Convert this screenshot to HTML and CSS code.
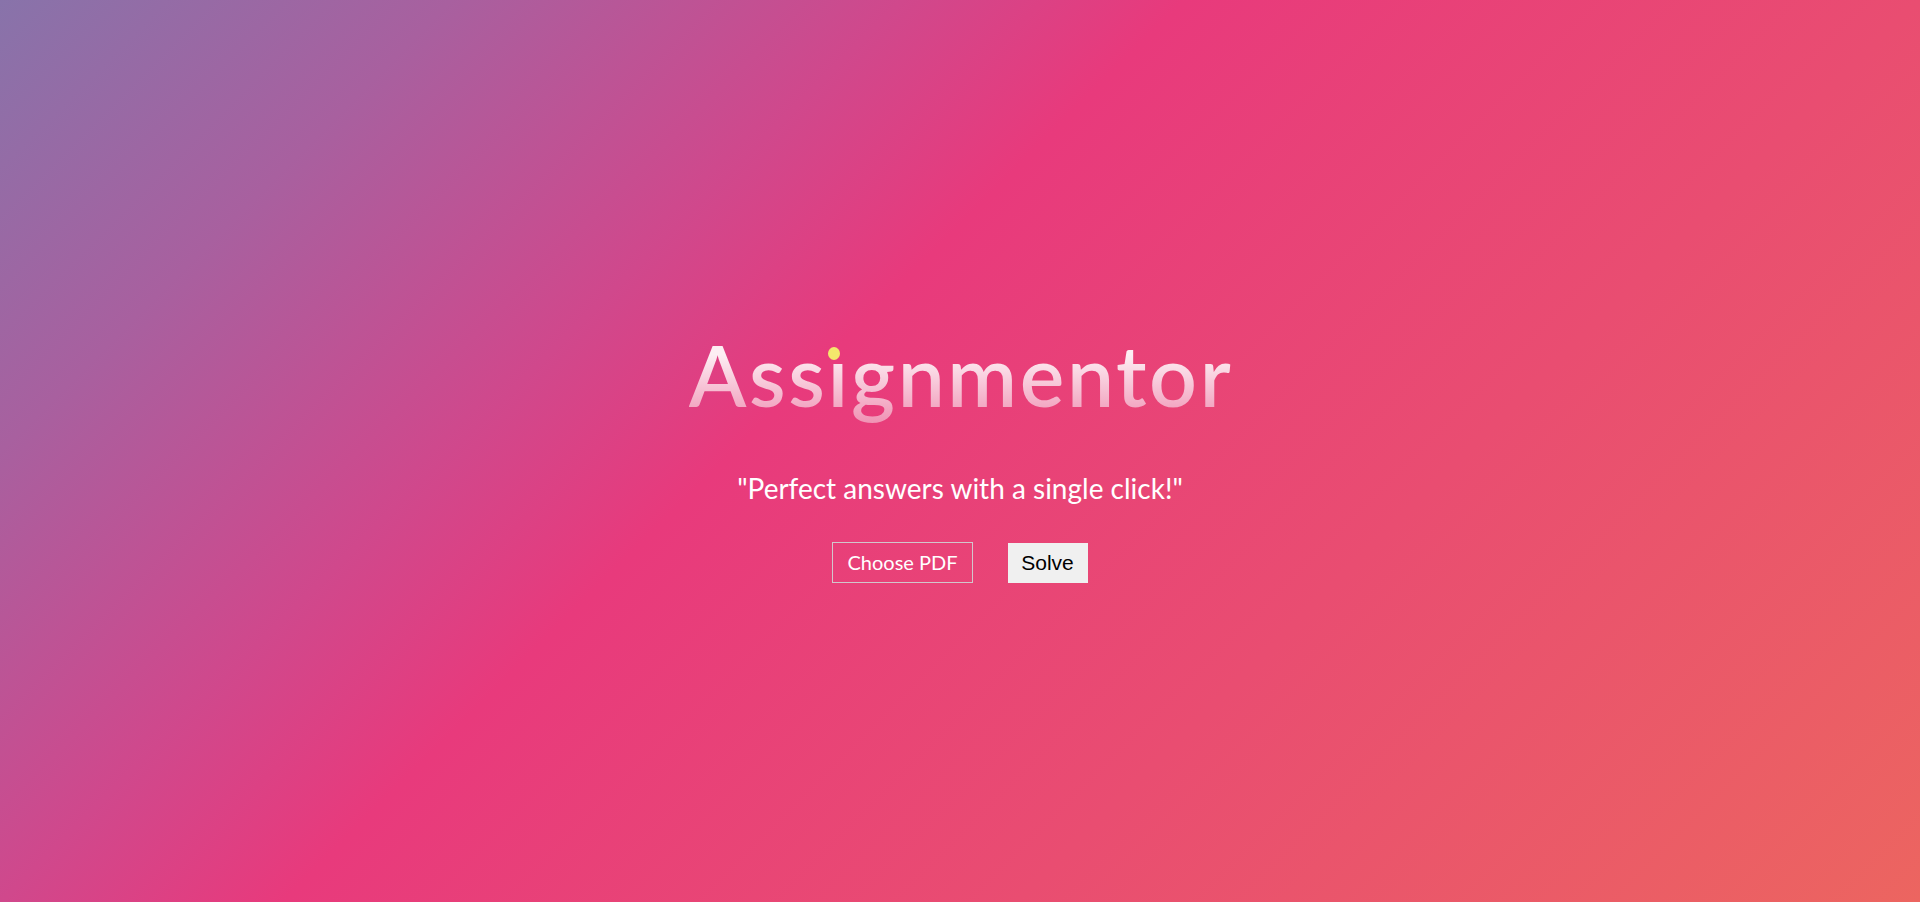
FILE: index.html
```html
<!DOCTYPE html>
<html lang="en">
<head>
<meta charset="utf-8">
<title>Assignmentor</title>
<link rel="stylesheet" href="styles.css">
</head>
<body>
<main class="hero">
  <h1 class="title">Assıgnmentor<span class="i-dot"></span></h1>
  <p class="tagline">"Perfect answers with a single click!"</p>
  <div class="actions">
    <label class="choose">Choose PDF</label>
    <button class="solve" type="button">Solve</button>
  </div>
</main>
</body>
</html>
```

FILE: styles.css
```css
html, body {
  margin: 0;
  height: 100%;
}

body {
  font-family: "Lato", "Noto Sans", sans-serif;
  background: linear-gradient(135deg,
    #8873aa 0%,
    #a8609f 16%,
    #d0488c 32%,
    #e83a7c 42%,
    #e94d71 68%,
    #ec6560 100%);
  color: #fff;
}

.hero {
  box-sizing: border-box;
  height: 100%;
  padding-top: 10px;
  display: flex;
  flex-direction: column;
  align-items: center;
  justify-content: center;
}

.title {
  position: relative;
  margin: 0 0 0 2px;
  padding: 4px 0 14px;
  font-size: 84px;
  font-weight: 600;
  line-height: 1;
  letter-spacing: 2.6px;
  background: linear-gradient(to bottom, #fdeef3 25%, #ee88ad 100%);
  -webkit-background-clip: text;
  background-clip: text;
  color: transparent;
}

.i-dot {
  position: absolute;
  left: 139px;
  top: 18px;
  width: 12px;
  height: 13px;
  border-radius: 50%;
  background: #f4e86c;
}

.tagline {
  margin: 41.5px 0 0;
  font-size: 28px;
  line-height: 1.2;
}

.actions {
  margin-top: 35px;
  display: flex;
  align-items: center;
  gap: 35px;
}

.choose {
  box-sizing: border-box;
  height: 41px;
  padding: 0 14px;
  display: flex;
  align-items: center;
  border: 1px solid #d2c6cc;
  font-size: 20px;
  color: #fff;
}

.solve {
  box-sizing: border-box;
  height: 40px;
  width: 80px;
  margin-top: 2px;
  border: none;
  background: #f0f0f0;
  color: #000;
  font-family: "Liberation Sans", Arial, sans-serif;
  font-size: 21px;
  padding: 0;
}
```
